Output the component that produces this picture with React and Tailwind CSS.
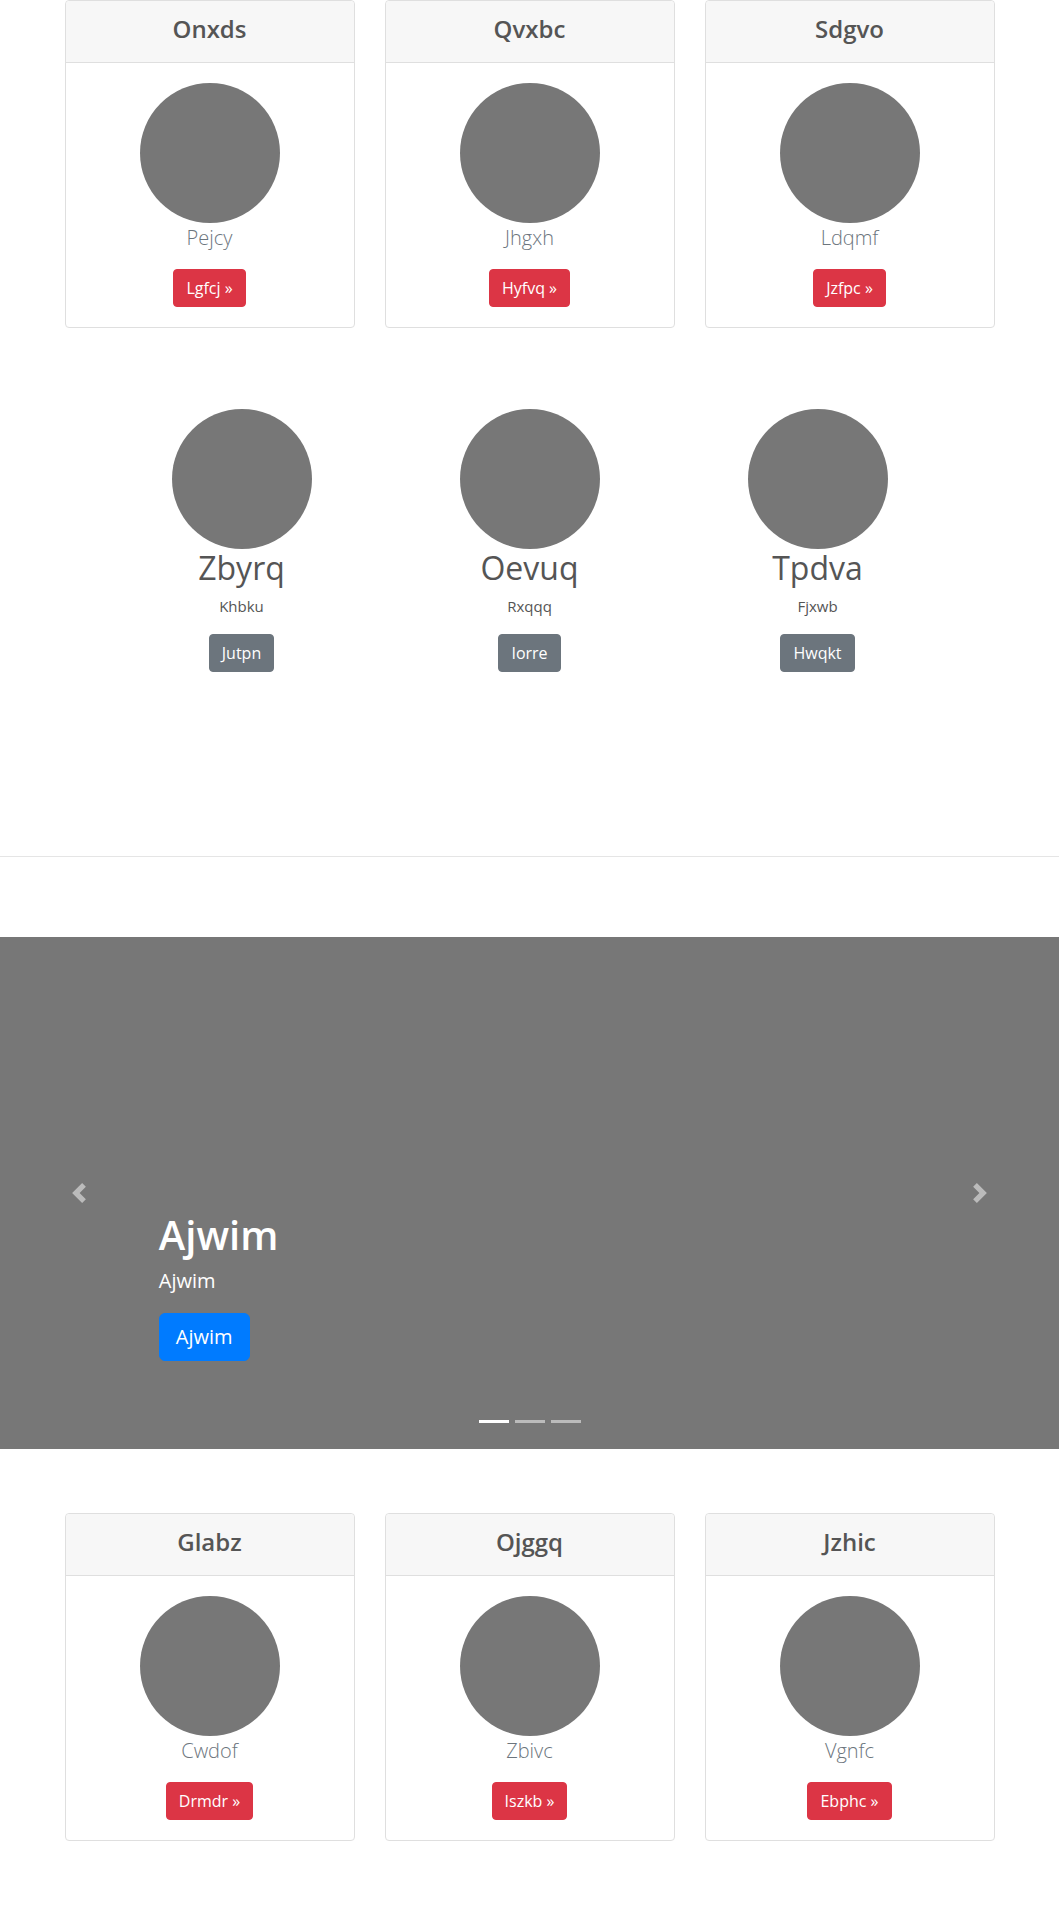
const topCards = [
  { title: 'Onxds', lead: 'Pejcy', btn: 'Lgfcj' },
  { title: 'Qvxbc', lead: 'Jhgxh', btn: 'Hyfvq' },
  { title: 'Sdgvo', lead: 'Ldqmf', btn: 'Jzfpc' },
]

const bottomCards = [
  { title: 'Glabz', lead: 'Cwdof', btn: 'Drmdr' },
  { title: 'Ojggq', lead: 'Zbivc', btn: 'Iszkb' },
  { title: 'Jzhic', lead: 'Vgnfc', btn: 'Ebphc' },
]

const people = [
  { name: 'Zbyrq', text: 'Khbku', btn: 'Jutpn' },
  { name: 'Oevuq', text: 'Rxqqq', btn: 'Iorre' },
  { name: 'Tpdva', text: 'Fjxwb', btn: 'Hwqkt' },
]

function Card({ title, lead, btn }) {
  return (
    <div className="border border-[#dfdfdf] rounded-[4px] text-center bg-white">
      <div className="bg-[#f7f7f7] border-b border-[#dfdfdf] px-5 pt-[9px] pb-[15px] rounded-t-[4px]">
        <h4 className="text-[24px] leading-[37px] font-semibold text-[#555]">{title}</h4>
      </div>
      <div className="p-5 flex flex-col items-center">
        <div className="w-[140px] h-[140px] rounded-full bg-[#777]" />
        <p className="text-[20px] leading-[30px] font-light text-[#6c757d] mb-4">{lead}</p>
        <a className="inline-block bg-[#dc3545] border border-[#dc3545] text-white text-[16px] leading-[24px] px-3 py-1.5 rounded-[4px]">
          {btn}&nbsp;&raquo;
        </a>
      </div>
    </div>
  )
}

function CardRow({ items }) {
  return (
    <div className="w-[960px] mx-auto px-[15px] grid grid-cols-3 gap-[30px]">
      {items.map(c => <Card key={c.title} {...c} />)}
    </div>
  )
}

function Chevron({ dir }) {
  const d = dir === 'left'
    ? 'M5.25 0l-4 4 4 4 1.5-1.5-2.5-2.5 2.5-2.5-1.5-1.5z'
    : 'M2.75 0l-1.5 1.5 2.5 2.5-2.5 2.5 1.5 1.5 4-4-4-4z'
  return (
    <svg width="20" height="20" viewBox="0 0 8 8" className="opacity-50">
      <path d={d} fill="#fff" />
    </svg>
  )
}

export default function App() {
  return (
    <div className="bg-white text-[#555] font-['Open_Sans',sans-serif] pb-20">
      <CardRow items={topCards} />

      <div className="w-[864px] mx-auto mt-[81px] grid grid-cols-3 text-center">
        {people.map(p => (
          <div key={p.name} className="flex flex-col items-center">
            <div className="w-[140px] h-[140px] rounded-full bg-[#777]" />
            <h2 className="text-[32px] leading-[38.4px] font-normal mb-2">{p.name}</h2>
            <p className="text-[15px] leading-[22.5px] mb-4">{p.text}</p>
            <a className="inline-block bg-[#6c757d] border border-[#6c757d] text-white text-[16px] leading-[24px] px-3 py-1.5 rounded-[4px]">
              {p.btn}
            </a>
          </div>
        ))}
      </div>

      <hr className="mt-[184px] border-t border-[#e5e5e5]" />

      <div className="relative mt-[80px] h-[512px] bg-[#777]">
        <div className="absolute left-0 top-0 bottom-0 w-[15%] flex items-center justify-center">
          <Chevron dir="left" />
        </div>
        <div className="absolute right-0 top-0 bottom-0 w-[15%] flex items-center justify-center">
          <Chevron dir="right" />
        </div>
        <div className="absolute left-[15%] right-[15%] bottom-[68px] py-5 text-white text-left">
          <h1 className="text-[40px] leading-[48px] font-semibold mb-2">Ajwim</h1>
          <p className="text-[20px] leading-[28px] mb-[18px]">Ajwim</p>
          <div className="flex">
            <a className="inline-block bg-[#007bff] border border-[#007bff] text-white text-[20px] leading-[30px] px-4 py-2 rounded-[6px]">
              Ajwim
            </a>
          </div>
        </div>
        <ol className="absolute left-[15%] right-[15%] bottom-[26px] flex justify-center">
          <li className="w-[30px] h-[3px] mx-[3px] bg-white" />
          <li className="w-[30px] h-[3px] mx-[3px] bg-white/50" />
          <li className="w-[30px] h-[3px] mx-[3px] bg-white/50" />
        </ol>
      </div>

      <div className="mt-[64px]">
        <CardRow items={bottomCards} />
      </div>
    </div>
  )
}
